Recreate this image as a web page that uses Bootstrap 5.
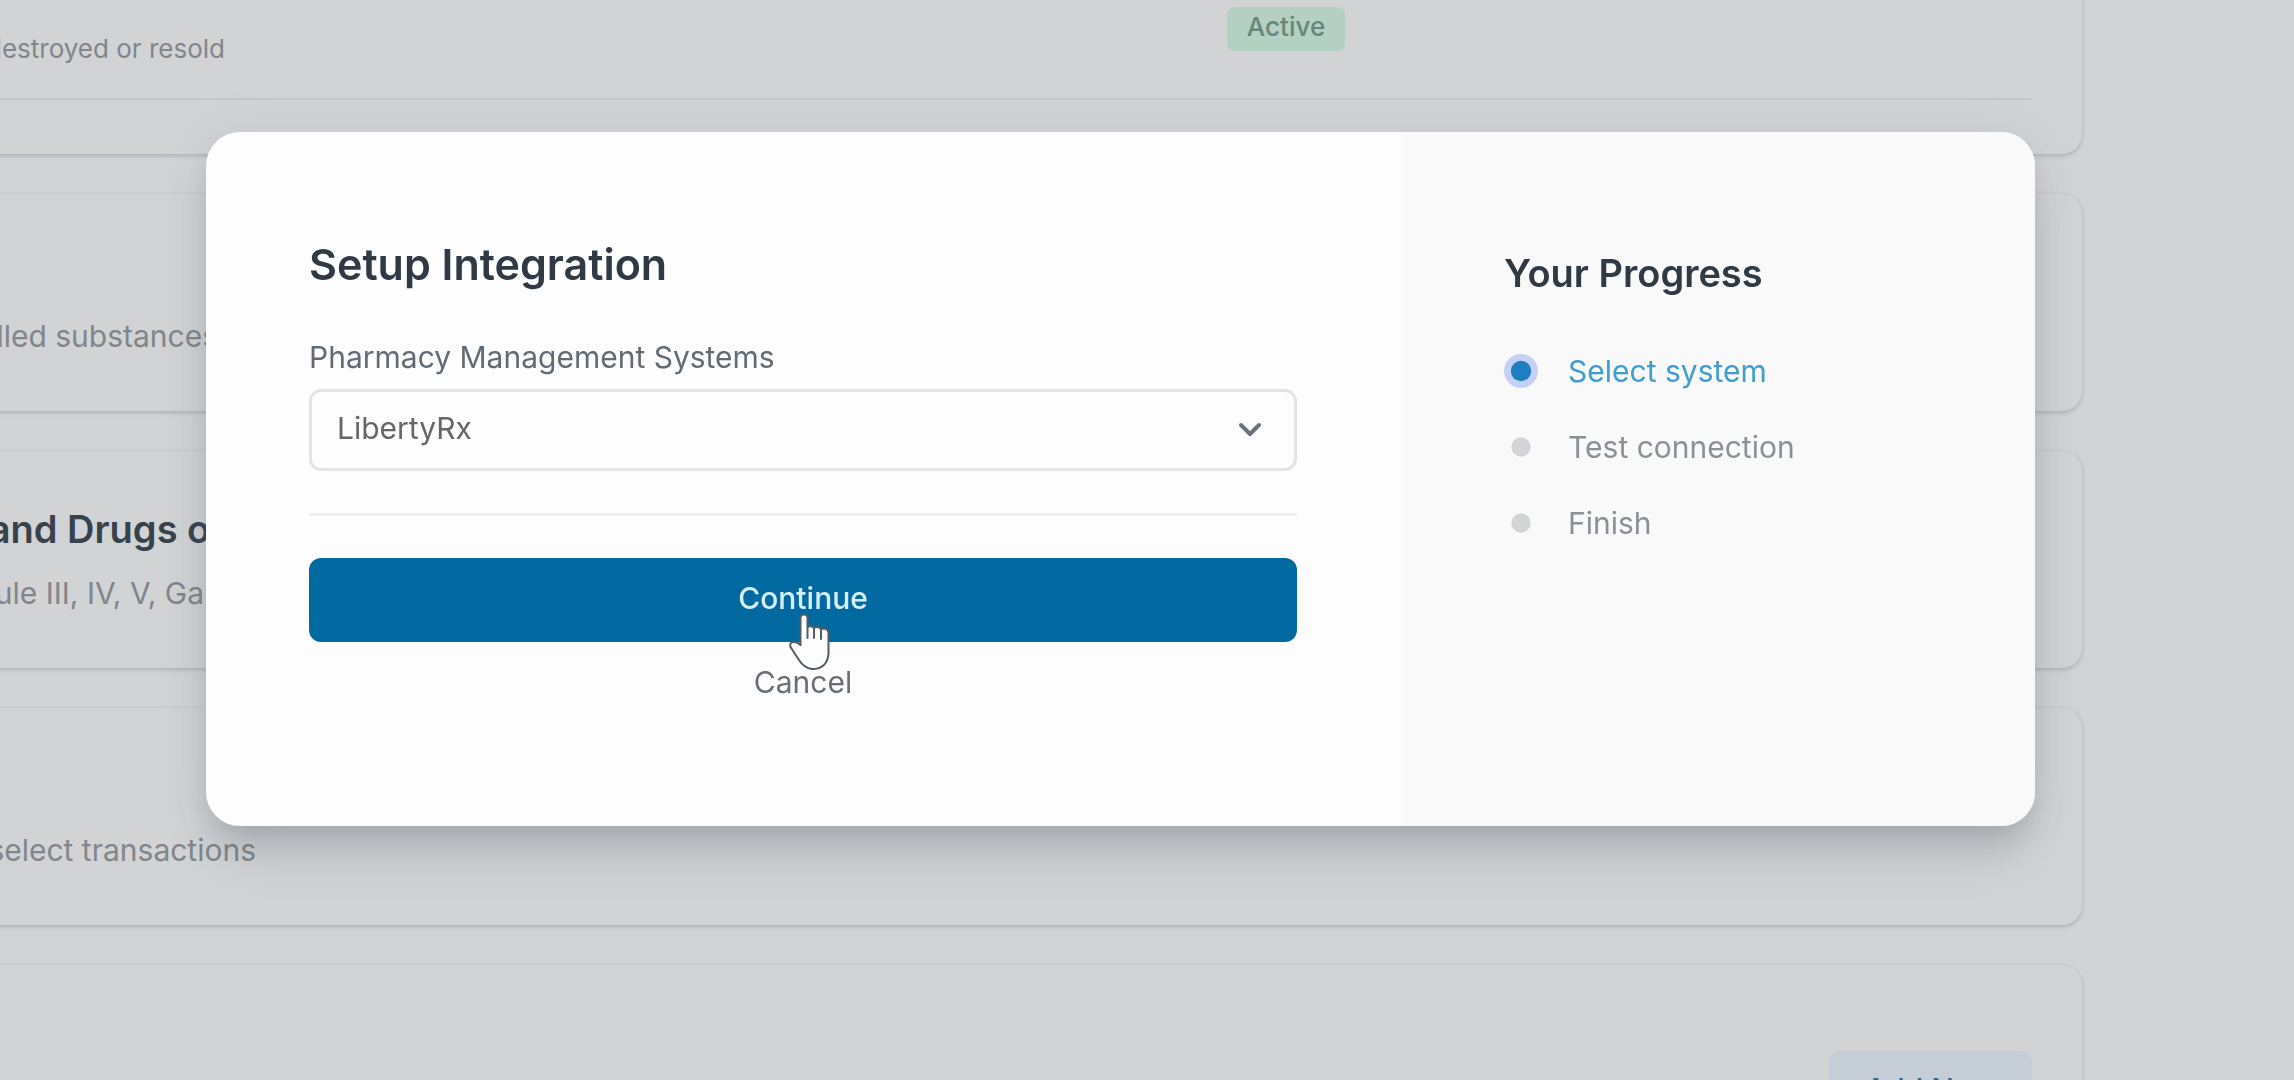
<!DOCTYPE html>
<html lang="en">
<head>
<meta charset="utf-8">
<meta name="viewport" content="width=device-width, initial-scale=1">
<title>Setup Integration</title>
<link href="https://cdn.jsdelivr.net/npm/bootstrap@5.3.0/dist/css/bootstrap.min.css" rel="stylesheet">
<style>
  body { font-family: Inter, "Liberation Sans", sans-serif; background: #d1d3d5; height: 100vh; overflow: hidden; color: #2f3a45; }
  .page { height: 100vh; overflow: hidden; padding-right: 212px; gap: 40px; }
  .panel { flex: none; background: #d1d3d5; border: 0; border-radius: 0 20px 20px 0; box-shadow: 0 2px 4px rgba(60, 70, 80, .2), 0 0 3px rgba(120, 150, 160, .14); padding: 0 50px 53px 20px; margin-left: -20px; height: 217px; }
  .panel-first { height: 154px; border-top-right-radius: 0; }
  .panel-first .entry { height: 100px; border-bottom: 2px solid #c5c7ca; }
  .panel-title { font-size: 38px; line-height: 52px; font-weight: 600; margin-bottom: 16px; color: #37424d; }
  .panel-text { font-size: 30px; line-height: 44px; color: #81868c; margin: 0; }
  .entry-text { font-size: 26px; line-height: 36px; color: #81868c; margin: 31px 0 0; }
  .clip { display: flex; justify-content: flex-end; white-space: nowrap; }
  .to-204 { width: 204px; }
  .to-218 { width: 218px; }
  .to-225 { width: 225px; }
  .to-256 { width: 256px; }
  .status { position: absolute; left: 1227px; top: 7px; width: 118px; padding: 4px 0 8px; background: #b3d0c2; color: #66877a; border-radius: 8px; font-size: 26px; line-height: 32px; font-weight: 500; }
  .btn-add { margin-top: 86px; padding: 16px 36px; font-size: 30px; line-height: 44px; font-weight: 500; border: 0; border-radius: 12px; background: #c5cdd6; color: #3b6785; }

  .modal { padding: 132px 259px 0 206px; overflow: hidden; }
  .modal .modal-dialog { max-width: none; margin: 0; }
  .modal .modal-content { border: 0; border-radius: 34px; background: #fdfdfd; overflow: hidden; box-shadow: 0 36px 48px -10px rgba(60, 68, 74, .18), 0 14px 22px -6px rgba(60, 68, 74, .12), 0 4px 50px rgba(110, 130, 145, .14); }
  .form-side { width: 65.34%; padding: 104px 104px 122px 103px; }
  .progress-side { width: 34.66%; padding: 113px 103px 104px; background: #f9f9f9; }
  .form-title { font-size: 43px; line-height: 56px; font-weight: 600; margin-bottom: 45px; }
  .form-side .form-label { display: block; font-size: 30px; line-height: 40px; color: #616b75; margin-bottom: 12px; }
  .form-side .form-select { height: 82px; padding: 0 84px 3px 25px; font-size: 30px; color: #666; background-color: #fdfdfd; border: 3px solid #e4e4e4; border-radius: 12px; background-image: url("data:image/svg+xml,%3Csvg xmlns='http://www.w3.org/2000/svg' viewBox='0 0 24 16'%3E%3Cpath fill='none' stroke='%236b727b' stroke-width='4' stroke-linecap='round' stroke-linejoin='round' d='M3 3l9 9 9-9'/%3E%3C/svg%3E"); background-size: 24px 16px; background-position: right 32px center; }
  .form-side hr { margin: 42px 0; border-top: 3px solid #efefef; opacity: 1; }
  .form-side .btn { font-size: 30px; line-height: 44px; border: 0; }
  .btn-continue, .btn-continue:hover { background: #0369a1; color: #d5eefb; border-radius: 12px; padding: 18px 0 22px; font-weight: 500; }
  .btn-cancel, .btn-cancel:hover { color: #686f78; margin-top: 18px; padding: 0; }
  .progress-title { font-size: 38px; line-height: 56px; font-weight: 600; margin-bottom: 48px; }
  .steps { gap: 32px; }
  .steps li { font-size: 30px; line-height: 44px; color: #8b9097; gap: 30px; }
  .steps .current { color: #3f9dd0; }
  .step-mark { width: 34px; height: 34px; flex: none; }
  .pointer { position: absolute; left: 788px; top: 613px; width: 44px; height: 58px; z-index: 1100; pointer-events: none; }
</style>
</head>
<body>
<main class="page d-flex flex-column">
  <section class="card panel panel-first">
    <div class="entry position-relative">
      <p class="entry-text clip to-225">destroyed or resold</p>
      <span class="status text-center">Active</span>
    </div>
  </section>
  <section class="card panel justify-content-end">
    <p class="panel-text clip to-218">lled substances</p>
  </section>
  <section class="card panel justify-content-end">
    <h2 class="panel-title clip to-225">and Drugs of</h2>
    <p class="panel-text clip to-204">dule III, IV, V, Ga</p>
  </section>
  <section class="card panel justify-content-end">
    <p class="panel-text clip to-256">select transactions</p>
  </section>
  <section class="card panel align-items-end">
    <button type="button" class="btn btn-add">Add New</button>
  </section>
</main>

<div class="modal d-block" role="dialog" aria-labelledby="setup-title">
  <div class="modal-dialog">
    <div class="modal-content flex-row">
      <form class="form-side d-flex flex-column">
        <h1 class="form-title" id="setup-title">Setup Integration</h1>
        <label class="form-label" for="system">Pharmacy Management Systems</label>
        <select class="form-select" id="system"><option>LibertyRx</option></select>
        <hr>
        <button type="button" class="btn btn-continue w-100">Continue</button>
        <button type="button" class="btn btn-cancel align-self-center">Cancel</button>
      </form>
      <aside class="progress-side">
        <h2 class="progress-title">Your Progress</h2>
        <ol class="steps list-unstyled d-flex flex-column mb-0">
          <li class="current d-flex align-items-center"><svg class="step-mark" viewBox="0 0 35 35" aria-hidden="true"><circle cx="17.5" cy="17.5" r="17.5" fill="#c5d0f6"/><circle cx="17.5" cy="17.5" r="10.5" fill="#1c80c3"/></svg>Select system</li>
          <li class="d-flex align-items-center"><svg class="step-mark" viewBox="0 0 35 35" aria-hidden="true"><circle cx="17.5" cy="17.5" r="10" fill="#d2d4d7"/></svg>Test connection</li>
          <li class="d-flex align-items-center"><svg class="step-mark" viewBox="0 0 35 35" aria-hidden="true"><circle cx="17.5" cy="17.5" r="10" fill="#d2d4d7"/></svg>Finish</li>
        </ol>
      </aside>
    </div>
  </div>
</div>

<svg class="pointer" viewBox="0 0 44 58" aria-hidden="true">
  <path d="M12.500 5Q12.500 1.500 16 1.500Q19.500 1.500 19.500 5V14Q23 12 26 15Q30 12.500 33 16Q40 14 40.500 20V41Q39 56 24 56Q16 55 11 47L2.500 34Q1 29 6 29Q10 29 12.500 32Z" fill="#fdfdfd" stroke="#555c66" stroke-width="2" stroke-linejoin="round"/>
  <path d="M19.500 14V25M26 15V25M33 16V26" fill="none" stroke="#555c66" stroke-width="2" stroke-linecap="round"/>
</svg>
<script src="https://cdn.jsdelivr.net/npm/bootstrap@5.3.0/dist/js/bootstrap.bundle.min.js"></script>
</body>
</html>
